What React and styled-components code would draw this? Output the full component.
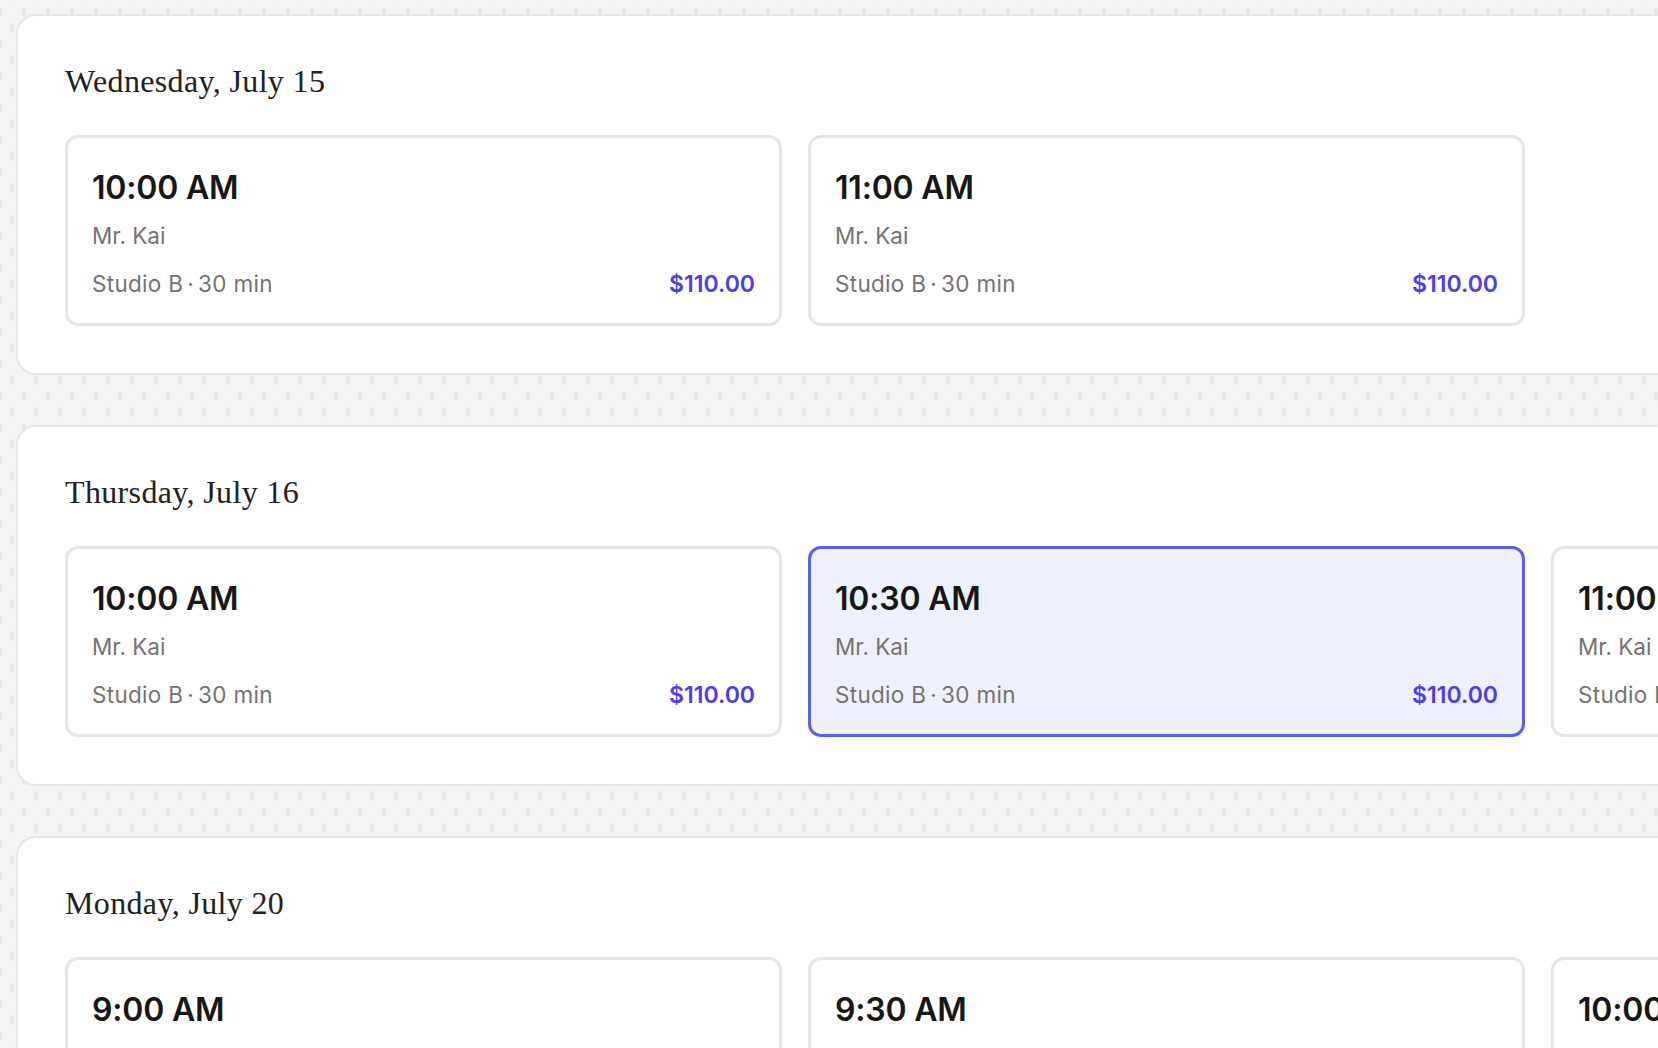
import React from "react";
import styled, { createGlobalStyle } from "styled-components";

const dashTile = encodeURIComponent(
  `<svg xmlns="http://www.w3.org/2000/svg" width="24" height="32">` +
    `<rect x="-1.6" y="0" width="3.2" height="10" rx="1.6" fill="#e4e5e8"/>` +
    `<rect x="22.4" y="0" width="3.2" height="10" rx="1.6" fill="#e4e5e8"/>` +
    `<rect x="10.4" y="16" width="3.2" height="10" rx="1.6" fill="#e4e5e8"/>` +
    `</svg>`
);

const GlobalStyle = createGlobalStyle`
  html, body {
    margin: 0;
    padding: 0;
    overflow: hidden;
  }
  body {
    background-color: #f3f4f6;
    background-image: url("data:image/svg+xml,${dashTile}");
    background-position: 0 7px;
    font-family: Inter, "Noto Sans", sans-serif;
  }
`;

const Page = styled.div`
  display: flex;
  flex-direction: column;
  gap: 50px;
  width: max-content;
  padding: 14px 0 40px 16px;
`;

const DayPanel = styled.section`
  background: #ffffff;
  border: 2px solid #e7e6e4;
  border-radius: 20px;
  padding: 47px;
  min-width: 1700px;
`;

const DayTitle = styled.h2`
  margin: 0 0 36px;
  font-family: "Liberation Serif", "DejaVu Serif", serif;
  font-weight: 400;
  font-size: 32px;
  line-height: 36px;
  letter-spacing: 0.35px;
  color: #222120;
`;

const SlotRow = styled.div`
  display: flex;
  gap: 26px;
`;

const SlotCard = styled.div`
  box-sizing: border-box;
  flex: 0 0 717px;
  height: 191px;
  padding: 30px 24px 23px;
  border: 3px solid ${(p) => (p.$selected ? "#5b5cf6" : "#e6e5e3")};
  border-radius: 13px;
  background: ${(p) => (p.$selected ? "#eef1fd" : "#ffffff")};
  cursor: pointer;
`;

const Time = styled.div`
  font-size: 32px;
  line-height: 40px;
  font-weight: 600;
  color: #181716;
  letter-spacing: -0.2px;
`;

const Teacher = styled.div`
  margin-top: 11px;
  font-size: 22.5px;
  line-height: 33px;
  color: #77726d;
`;

const MetaLine = styled.div`
  margin-top: 15px;
  display: flex;
  justify-content: space-between;
  align-items: baseline;
  font-size: 22.5px;
  line-height: 33px;
  color: #77726d;
`;

const Place = styled.span`
  letter-spacing: 0.3px;
`;

const Dot = styled.span`
  margin: 0 4px;
`;

const Price = styled.span`
  font-weight: 600;
  font-size: 23px;
  color: #4b3df5;
`;

const days = [
  {
    title: "Wednesday, July 15",
    slots: ["10:00 AM", "11:00 AM"],
  },
  {
    title: "Thursday, July 16",
    slots: ["10:00 AM", "10:30 AM", "11:00 AM"],
    selected: 1,
  },
  {
    title: "Monday, July 20",
    slots: ["9:00 AM", "9:30 AM", "10:00 AM"],
  },
];

const Slot = ({ time, selected }) => (
  <SlotCard $selected={selected}>
    <Time>{time}</Time>
    <Teacher>Mr. Kai</Teacher>
    <MetaLine>
      <Place>
        Studio B<Dot>·</Dot>30 min
      </Place>
      <Price>$110.00</Price>
    </MetaLine>
  </SlotCard>
);

const App = () => {
  return (
    <>
      <GlobalStyle />
      <Page>
        {days.map((day) => (
          <DayPanel key={day.title}>
            <DayTitle>{day.title}</DayTitle>
            <SlotRow>
              {day.slots.map((time, i) => (
                <Slot key={time} time={time} selected={day.selected === i} />
              ))}
            </SlotRow>
          </DayPanel>
        ))}
      </Page>
    </>
  );
};

export default App;
